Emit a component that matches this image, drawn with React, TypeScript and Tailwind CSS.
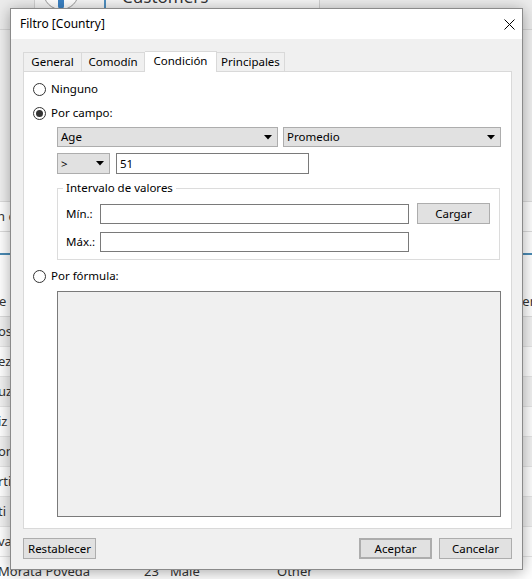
import { ReactNode } from "react"

const rows = ["os", "ez", "uz", "iz", "on", "rti", "ti", "va"]

function Radio({ checked, label }: { checked?: boolean; label: string }) {
  return (
    <div className="flex items-center h-4">
      <span className="w-[13px] h-[13px] rounded-full border border-[#333] bg-white flex items-center justify-center">
        {checked && <span className="w-[7px] h-[7px] rounded-full bg-[#333]" />}
      </span>
      <span className="ml-[5px]">{label}</span>
    </div>
  )
}

function Caret() {
  return (
    <svg width="8" height="5" viewBox="0 0 8 5" className="shrink-0">
      <path d="M0 0h8L4 4.5z" fill="#000" />
    </svg>
  )
}

function Combo({ value, className }: { value: string; className: string }) {
  return (
    <div
      className={`h-5 bg-[#e1e1e1] border border-[#adadad] flex items-center justify-between pl-[3px] pr-[5px] ${className}`}
    >
      <span>{value}</span>
      <Caret />
    </div>
  )
}

function Button({ children, className = "" }: { children: ReactNode; className?: string }) {
  return (
    <div
      className={`h-[21px] w-[73px] bg-[#e1e1e1] border border-[#adadad] flex items-center justify-center ${className}`}
    >
      {children}
    </div>
  )
}

export default function App() {
  return (
    <div className="relative w-[532px] h-[579px] overflow-hidden bg-white text-[11.5px] text-black font-['Segoe_UI','Noto_Sans',sans-serif]">
      {/* app behind the dialog */}
      <div className="flex flex-col h-full text-[13px] text-[#333]">
        <div className="h-[30px] shrink-0 flex bg-[#ececec] border-b border-[#d6d6d6]">
          <div className="w-[34px]" />
          <div className="w-[286px] bg-[#f5f5f5] border-x border-[#d0d0d0] flex items-start pl-[8px] -mt-[26px]">
            <span className="w-[36px] h-[36px] rounded-full border border-[#999] bg-white flex items-end justify-center">
              <span className="w-[6px] h-[10px] rounded-b-full bg-[#3b82c4]" />
            </span>
            <span className="ml-[25px] w-[2px] h-[40px] bg-[#4f8fbf]" />
            <span className="ml-[16px] mt-[10px] text-[17px]">Customers</span>
          </div>
        </div>
        <div className="h-[172px] shrink-0 bg-[#f0f0f0] border-b border-[#dcdcdc]" />
        <div className="h-[30px] shrink-0 border-b border-[#dcdcdc] flex items-center">
          <span className="-ml-[3px]">n c</span>
        </div>
        <div className="h-[21px] shrink-0" />
        <div className="h-[2px] shrink-0 bg-[#4a8bb5]" />
        <div className="h-[32px] shrink-0" />
        <div className="h-[30px] shrink-0 flex items-center justify-between border-b border-[#dcdcdc]">
          <span className="-ml-[1px]">e</span>
          <span className="-mr-[3px]">er</span>
        </div>
        {rows.map((r, i) => (
          <div
            key={r}
            className={`h-[30px] shrink-0 flex items-center border-b border-[#e4e4e4] ${i % 2 === 0 ? "bg-[#f2f2f2]" : "bg-white"}`}
          >
            <span className="-ml-[2px]">{r}</span>
          </div>
        ))}
        <div className="h-[30px] shrink-0 flex items-center">
          <span className="-ml-[2px] w-[146px]">Morata Poveda</span>
          <span className="w-[26px]">23</span>
          <span className="w-[107px]">Male</span>
          <span>Other</span>
        </div>
      </div>

      {/* dialog */}
      <div className="absolute left-[10px] top-[8px] w-[513px] h-[562px] flex flex-col bg-[#f0f0f0] border border-[#8a8a8a] shadow-[0_2px_14px_rgba(0,0,0,0.35)]">
        <div className="h-[30px] bg-white flex items-center justify-between pl-[9px] pr-[7px]">
          <span className="text-[12px]">Filtro [Country]</span>
          <svg width="11" height="11" viewBox="0 0 11 11">
            <path d="M0.5 0.5l10 10M10.5 0.5l-10 10" stroke="#000" strokeWidth="1" fill="none" />
          </svg>
        </div>

        <div className="flex-1 flex flex-col pl-[12px] pr-[10px] pt-[11px] pb-[10px]">
          <div className="flex items-end h-[21px]">
            <div className="h-[19px] w-[59px] border border-[#d9d9d9] border-b-0 flex items-center justify-center">General</div>
            <div className="h-[19px] w-[63px] border border-[#d9d9d9] border-b-0 border-l-0 flex items-center justify-center">Comodín</div>
            <div className="h-[21px] w-[72px] bg-white border border-[#d9d9d9] border-b-0 border-l-0 -mb-px relative z-10 flex items-center justify-center pb-[2px]">Condición</div>
            <div className="h-[19px] w-[68px] border border-[#d9d9d9] border-b-0 border-l-0 flex items-center justify-center">Principales</div>
          </div>

          <div className="h-[458px] bg-white border border-[#d9d9d9] flex flex-col pl-[9px] pr-[10px] pt-[9px]">
            <Radio label="Ninguno" />
            <div className="mt-[8px]">
              <Radio checked label="Por campo:" />
            </div>

            <div className="ml-[24px] flex flex-col">
              <div className="mt-[6px] flex gap-[5px]">
                <Combo value="Age" className="w-[221px]" />
                <Combo value="Promedio" className="w-[218px]" />
              </div>
              <div className="mt-[6px] flex gap-[6px]">
                <Combo value=">" className="w-[53px] h-[21px]" />
                <div className="w-[193px] h-[21px] border border-[#7a7a7a] bg-white flex items-center pl-[3px]">51</div>
              </div>

              <div className="relative mt-[14px] w-[443px] border border-[#dcdcdc] pl-[8px] pr-[9px] pt-[14px] pb-[7px] flex flex-col gap-[8px]">
                <span className="absolute -top-[9px] left-[5px] bg-white px-[3px] leading-[16px]">Intervalo de valores</span>
                <div className="flex items-center">
                  <span className="w-[34px]">Mín.:</span>
                  <div className="w-[309px] h-5 border border-[#7a7a7a] bg-white" />
                  <Button className="ml-[8px]">Cargar</Button>
                </div>
                <div className="flex items-center">
                  <span className="w-[34px]">Máx.:</span>
                  <div className="w-[309px] h-5 border border-[#7a7a7a] bg-white" />
                </div>
              </div>
            </div>

            <div className="mt-[8px]">
              <Radio label="Por fórmula:" />
            </div>
            <div className="ml-[24px] mt-[7px] w-[444px] h-[226px] border border-[#7a7a7a] bg-[#f0f0f0]" />
          </div>

          <div className="mt-[9px] flex items-center">
            <Button className="w-[72px]">Restablecer</Button>
            <div className="flex-1" />
            <Button className="border-[#0078d7] border-2">Aceptar</Button>
            <Button className="ml-[7px]">Cancelar</Button>
          </div>
        </div>
      </div>
    </div>
  )
}
